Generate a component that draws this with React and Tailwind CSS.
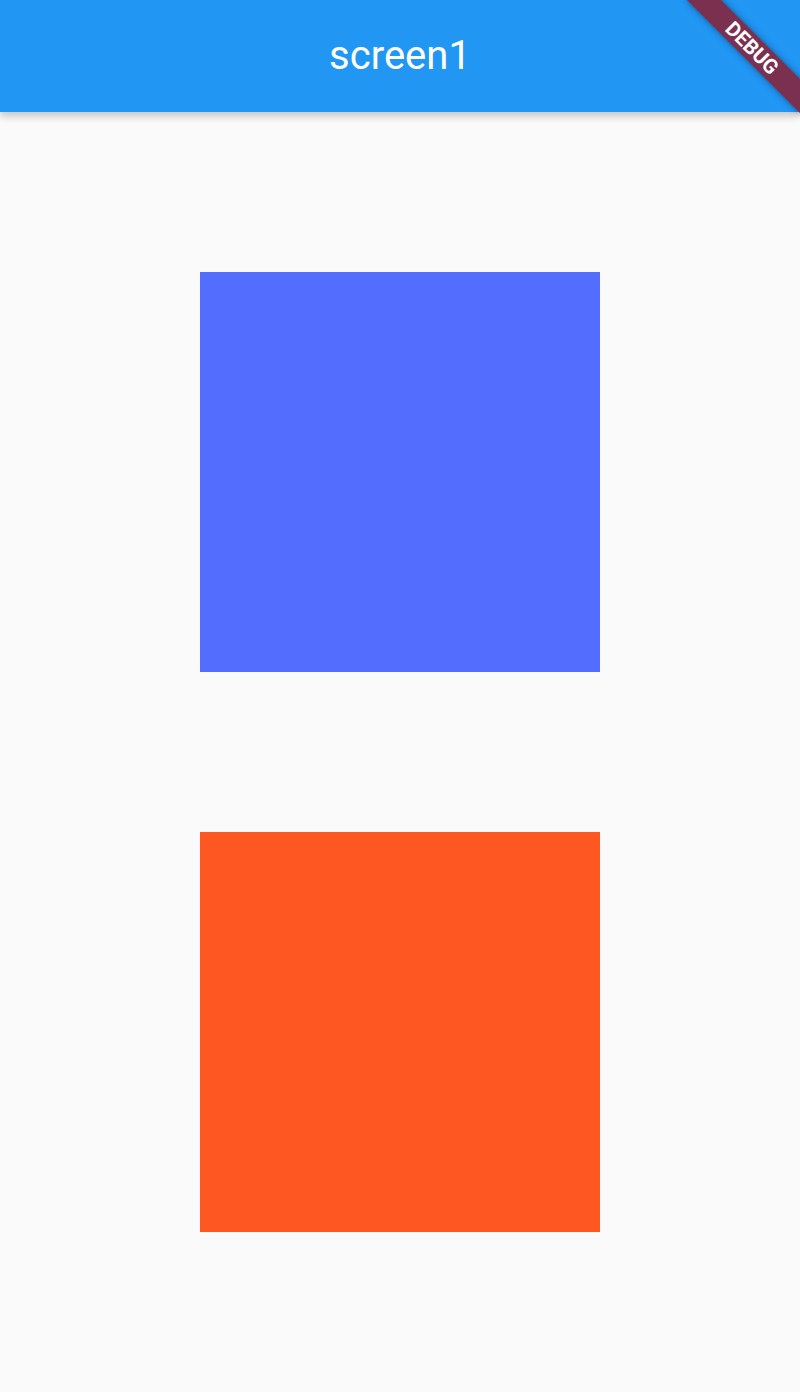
import React from 'react'

const DebugBanner = () => (
  <div className="pointer-events-none absolute inset-0 z-20 overflow-hidden">
    <div className="absolute left-[672px] top-[36px] flex h-[24px] w-[160px] rotate-45 items-center justify-center bg-[#7c3050] shadow-[0_0_6px_rgba(0,0,0,0.45)]">
      <span className="text-[20.4px] font-bold leading-none tracking-normal text-white" style={{ fontFamily: 'Roboto, "Liberation Sans", sans-serif' }}>
        DEBUG
      </span>
    </div>
  </div>
)

const App = () => {
  return (
    <div className="relative flex h-[1392px] w-[800px] flex-col overflow-hidden bg-[#fafafa]" style={{ fontFamily: 'Roboto, "Liberation Sans", sans-serif' }}>
      <header className="relative z-10 flex h-[112px] shrink-0 items-center justify-center bg-[#2196f3] shadow-[0_4px_8px_rgba(0,0,0,0.22)]">
        <h1 className="text-[40px] font-normal leading-none text-white">screen1</h1>
      </header>

      <main className="flex flex-1 flex-col items-center justify-evenly">
        <div className="h-[400px] w-[400px] bg-[#536dfe]" />
        <div className="h-[400px] w-[400px] bg-[#ff5722]" />
      </main>

      <DebugBanner />
    </div>
  )
}

export default App
